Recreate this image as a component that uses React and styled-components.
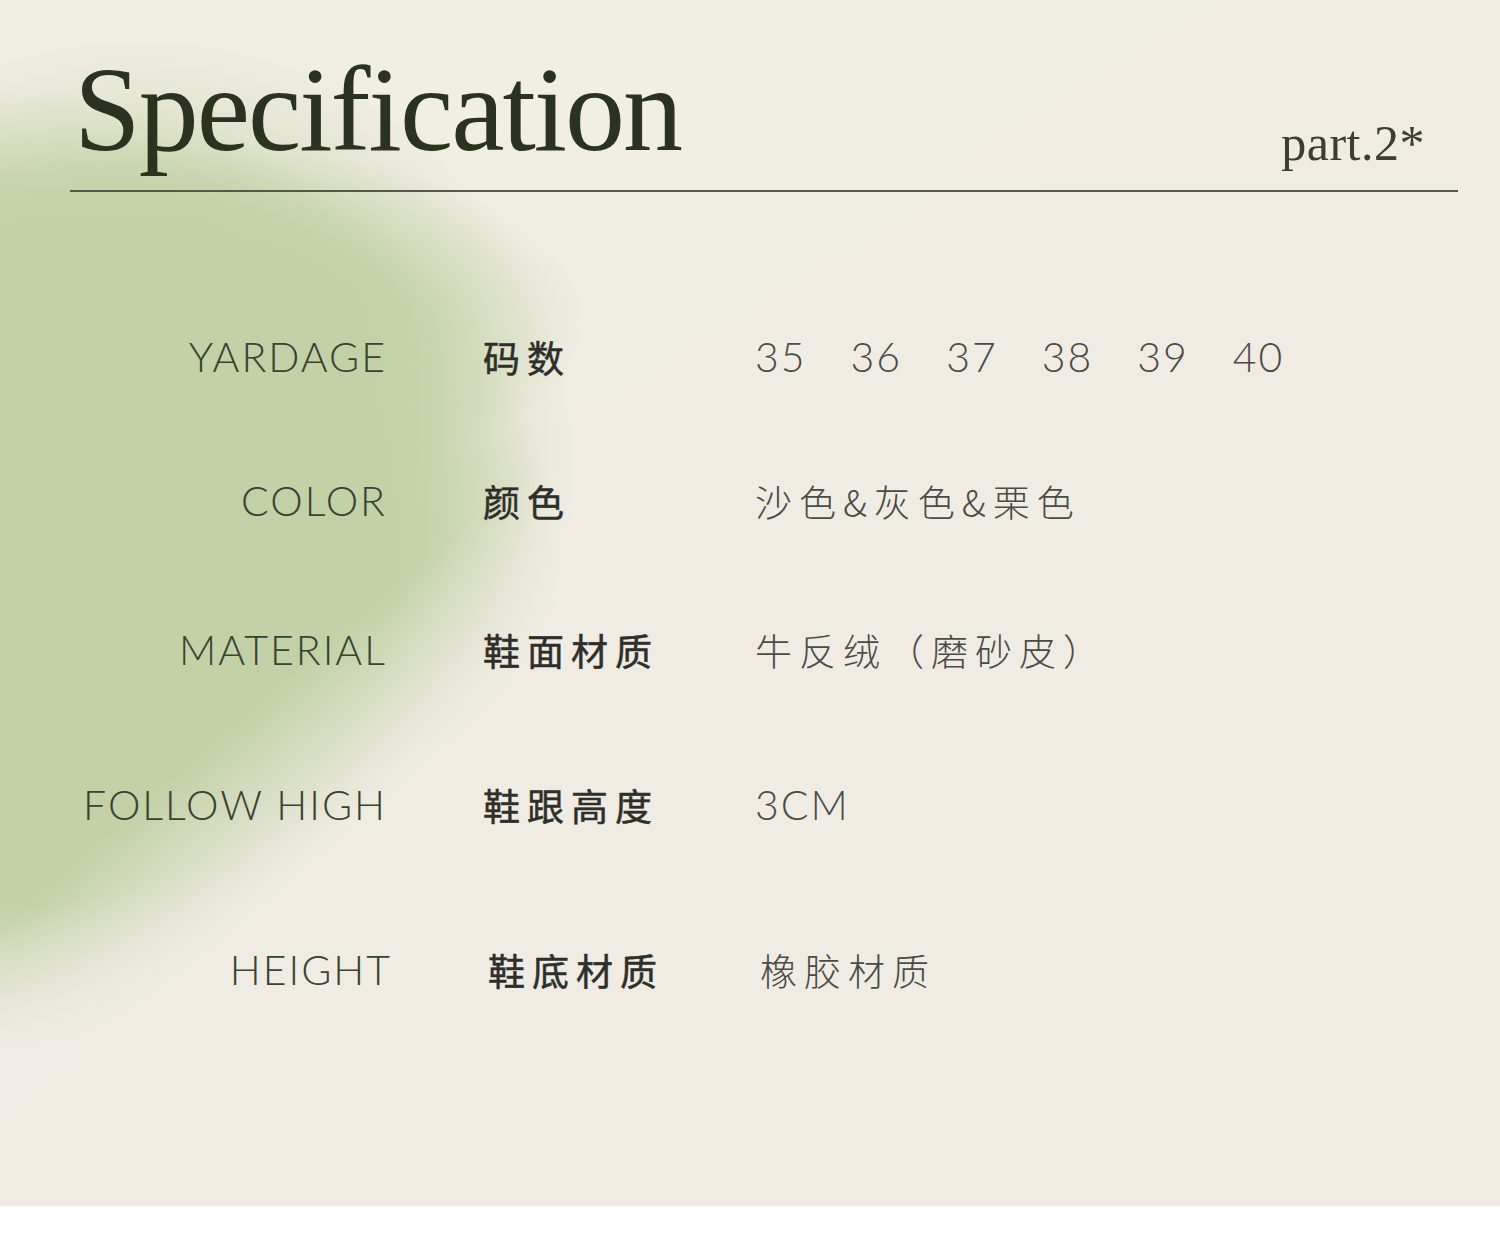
import React from 'react';
import styled, { createGlobalStyle } from 'styled-components';

const G = '194, 209, 166';

const GlobalStyle = createGlobalStyle`
  html, body {
    margin: 0;
    padding: 0;
    background: #ffffff;
  }
`;

const Page = styled.div`
  height: 1206px;
  display: flex;
  flex-direction: column;
  background:
    linear-gradient(139deg, rgba(240, 236, 228, 0) 700px, #f0ece4 860px),
    radial-gradient(ellipse 560px 480px at 0px 570px, rgb(${G}) 0%, rgb(${G}) 70%, rgba(${G}, 0.5) 86%, rgba(${G}, 0) 100%),
    radial-gradient(circle 440px at 140px 470px, rgb(${G}) 0px, rgb(${G}) 230px, rgba(${G}, 0.4) 330px, rgba(${G}, 0) 440px),
    radial-gradient(ellipse 420px 180px at 170px 320px, rgb(${G}) 0%, rgb(${G}) 45%, rgba(${G}, 0.4) 75%, rgba(${G}, 0) 100%),
    linear-gradient(180deg, #f1eee3 0%, #f0ebe5 100%);
`;

const Header = styled.header`
  display: flex;
  justify-content: space-between;
  align-items: flex-end;
  margin: 0 42px 0 70px;
  padding-top: 50px;
  border-bottom: 2px solid #55584a;
`;

const Title = styled.h1`
  margin: 0 0 20px 4px;
  font-family: 'Liberation Serif', 'Times New Roman', serif;
  font-weight: 400;
  font-size: 120px;
  line-height: 120px;
  letter-spacing: -2px;
  color: #2b3220;
`;

const Part = styled.span`
  margin: 0 33px 22px 0;
  font-family: 'Liberation Serif', 'Times New Roman', serif;
  font-size: 50px;
  line-height: 50px;
  letter-spacing: 0.5px;
  color: #3c3d33;
`;

const SpecList = styled.section`
  display: flex;
  flex-direction: column;
  padding-top: 140px;
`;

const Row = styled.div`
  display: flex;
  align-items: center;
  height: 50px;
  margin-top: ${(p) => p.$gap}px;
  padding-left: ${(p) => p.$nudge || 0}px;
`;

const EnLabel = styled.div`
  width: 387px;
  flex-shrink: 0;
  text-align: right;
  font-family: Lato, 'Open Sans', sans-serif;
  font-weight: 300;
  font-size: 41px;
  line-height: 50px;
  letter-spacing: 2px;
  color: #3a4231;
  white-space: nowrap;
`;

const CnLabel = styled.div`
  width: 272px;
  flex-shrink: 0;
  margin-left: 96px;
  font-family: 'Noto Sans CJK SC', 'Noto Sans', sans-serif;
  font-weight: 400;
  font-size: 37px;
  line-height: 50px;
  letter-spacing: 7px;
  color: #2e2f2a;
  -webkit-text-stroke: 0.5px #2e2f2a;
`;

const Value = styled.div`
  display: flex;
  gap: 44px;
  font-family: ${(p) =>
    p.$latin
      ? "Lato, 'Open Sans', sans-serif"
      : "'Noto Sans CJK SC', 'Noto Sans', sans-serif"};
  font-weight: 300;
  font-size: ${(p) => (p.$latin ? 41 : 37)}px;
  line-height: 50px;
  letter-spacing: ${(p) => (p.$latin ? 2 : 7)}px;
  color: #4b4b46;
  white-space: nowrap;
`;

const rows = [
  { en: 'YARDAGE', cn: '码数', sizes: ['35', '36', '37', '38', '39', '40'], gap: 0 },
  { en: 'COLOR', cn: '颜色', value: '沙色&灰色&栗色', gap: 94 },
  { en: 'MATERIAL', cn: '鞋面材质', value: '牛反绒（磨砂皮）', gap: 99 },
  { en: 'FOLLOW HIGH', cn: '鞋跟高度', value: '3CM', latin: true, gap: 105 },
  { en: 'HEIGHT', cn: '鞋底材质', value: '橡胶材质', gap: 115, nudge: 5 },
];

export default function App() {
  return (
    <>
      <GlobalStyle />
      <Page>
        <Header>
          <Title>Specification</Title>
          <Part>part.2*</Part>
        </Header>
        <SpecList>
          {rows.map((r) => (
            <Row key={r.en} $gap={r.gap} $nudge={r.nudge}>
              <EnLabel>{r.en}</EnLabel>
              <CnLabel>{r.cn}</CnLabel>
              {r.sizes ? (
                <Value $latin>
                  {r.sizes.map((s) => (
                    <span key={s}>{s}</span>
                  ))}
                </Value>
              ) : (
                <Value $latin={r.latin}>{r.value}</Value>
              )}
            </Row>
          ))}
        </SpecList>
      </Page>
    </>
  );
}
